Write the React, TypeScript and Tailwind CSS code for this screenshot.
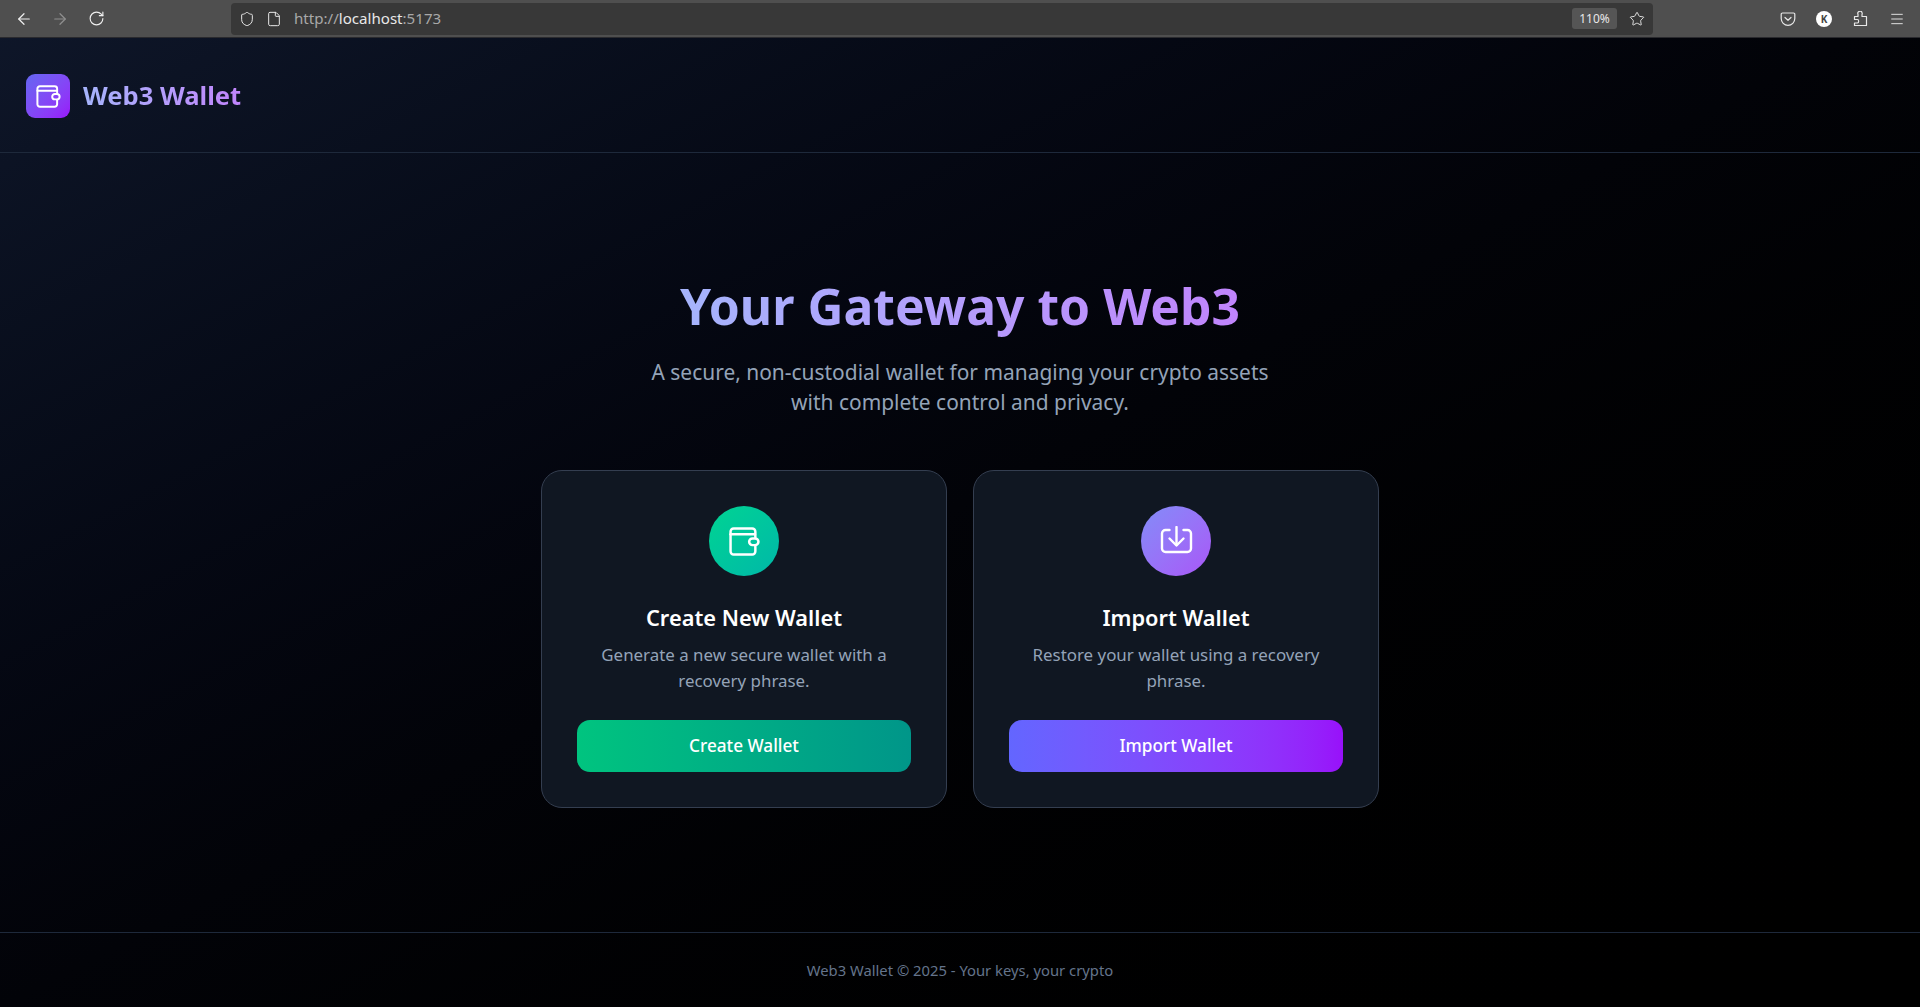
import { ArrowLeft, ArrowRight, RotateCw, Shield, File, Star, Menu } from "lucide-react"

const font = "font-['Noto_Sans',sans-serif]"

// wallet glyph, same drawing in the logo and in the card
function WalletIcon({ className }: { className: string }) {
  return (
    <svg viewBox="0 0 30 28" fill="none" stroke="white" strokeWidth="2.4" strokeLinecap="round" strokeLinejoin="round" className={className}>
      <path d="M25.5 10V4.5A3 3 0 0 0 22.5 1.5H4.5A3 3 0 0 0 1.5 4.5V23.5A3 3 0 0 0 4.5 26.5H22.5A3 3 0 0 0 25.5 23.5V18.5" />
      <path d="M1.5 7H25" />
      <rect x="19.5" y="11" width="9" height="6.5" rx="3.25" />
    </svg>
  )
}

function ImportIcon({ className }: { className: string }) {
  return (
    <svg viewBox="0 0 32 28" fill="none" stroke="white" strokeWidth="2.4" strokeLinecap="round" strokeLinejoin="round" className={className}>
      <path d="M9 4H5A3.5 3.5 0 0 0 1.5 7.5V22.5A3.5 3.5 0 0 0 5 26H27A3.5 3.5 0 0 0 30.5 22.5V7.5A3.5 3.5 0 0 0 27 4H23" />
      <path d="M16 1V19" />
      <path d="M9 12.5L16 19.5L23 12.5" />
    </svg>
  )
}

function PocketIcon() {
  return (
    <svg viewBox="0 0 16 16" fill="none" stroke="#e8e8e8" strokeWidth="1.2" strokeLinecap="round" strokeLinejoin="round" className="h-4 w-4">
      <path d="M2.5 2H13.5A1.3 1.3 0 0 1 14.8 3.3V7.5A6.8 6.8 0 0 1 1.2 7.5V3.3A1.3 1.3 0 0 1 2.5 2Z" />
      <path d="M5 6.5L8 9.3L11 6.5" />
    </svg>
  )
}

// firefox style extensions piece
function ExtensionIcon() {
  return (
    <svg viewBox="0 0 16 16" fill="none" stroke="#e8e8e8" strokeWidth="1.2" strokeLinejoin="round" className="h-4 w-4">
      <path d="M1.5 8.5V5.5H5V3.2A2 2 0 0 1 9 1.5C9.3 2 9.3 2.7 9 3.5V5.5H13.5V14.5H1.5V12H4.5C6 12 6 8.5 4.5 8.5Z" />
    </svg>
  )
}

function BrowserBar() {
  return (
    <div className={`flex h-[38px] shrink-0 items-center border-b border-[#2a2a2e] bg-[#4f4f4f] ${font}`}>
      <div className="flex w-[231px] shrink-0 items-center pl-[15px] text-[#f0f0f0]">
        <ArrowLeft className="h-[18px] w-[18px]" strokeWidth={1.6} />
        <ArrowRight className="ml-[18px] h-[18px] w-[18px] text-[#8f8f8f]" strokeWidth={1.6} />
        <RotateCw className="ml-[19px] h-[17px] w-[17px]" strokeWidth={1.6} />
      </div>
      <div className="flex h-[32px] w-[1422px] shrink-0 items-center rounded-[4px] bg-[#383838] pl-[8px] text-[#e8e8e8]">
        <Shield className="h-4 w-4" strokeWidth={1.5} />
        <File className="ml-[11px] h-4 w-4" strokeWidth={1.5} />
        <span className="ml-[12px] text-[15.1px] text-[#a8a8a8]">
          http://<span className="text-[#e8e8e8]">localhost</span>:5173
        </span>
        <span className="ml-auto flex h-[21px] w-[45px] items-center justify-center rounded-[3px] bg-[#555555] text-[12px] text-[#e8e8e8]">110%</span>
        <Star className="ml-[12px] mr-[8px] h-4 w-4" strokeWidth={1.4} />
      </div>
      <div className="ml-[127px] flex items-center text-[#e8e8e8]">
        <PocketIcon />
        <span className="ml-[20px] flex h-4 w-4 items-center justify-center rounded-full bg-white text-[10px] leading-none font-bold text-[#444444]">K</span>
        <span className="ml-[21px]">
          <ExtensionIcon />
        </span>
        <Menu className="ml-[20px] h-4 w-4" strokeWidth={1.4} />
      </div>
    </div>
  )
}

function ActionCard({
  icon,
  circle,
  title,
  text,
  button,
  buttonClass,
}: {
  icon: React.ReactNode
  circle: string
  title: string
  text: string
  button: string
  buttonClass: string
}) {
  return (
    <div className="flex h-[338px] w-[406px] flex-col items-center rounded-[21px] border border-[#343e50] bg-[#101722] px-[35px] pt-[35px]">
      <div className={`flex h-[70px] w-[70px] items-center justify-center rounded-full ${circle}`}>{icon}</div>
      <h2 className="mt-[26px] text-[21.8px] leading-[32px] font-semibold text-white">{title}</h2>
      <p className="mt-[8px] text-[16.9px] leading-[26.4px] text-[#94a3b8]">{text}</p>
      <button className={`mt-[25px] h-[52px] w-full rounded-[13px] text-[17.2px] font-medium text-white ${buttonClass}`}>{button}</button>
    </div>
  )
}

export default function App() {
  return (
    <div className={`flex h-[1007px] flex-col overflow-hidden bg-gradient-to-br from-[#0f172a] via-[#020308] via-50% to-black text-center ${font}`}>
      <BrowserBar />

      <header className="flex h-[115px] shrink-0 items-center gap-[13px] border-b border-[#1e293b] pt-[2px] pl-[26px]">
        <div className="flex h-[44px] w-[44px] items-center justify-center rounded-[9px] bg-gradient-to-br from-[#6366f1] to-[#9810fa]">
          <WalletIcon className="h-[23px] w-[25px]" />
        </div>
        <span className="bg-gradient-to-r from-[#a5b4fc] to-[#c084fc] bg-clip-text text-[25.6px] font-bold text-transparent">Web3 Wallet</span>
      </header>

      <main className="flex flex-1 flex-col items-center pt-[118px]">
        <h1 className="bg-gradient-to-r from-[#a5b4fc] to-[#c084fc] bg-clip-text text-[49.8px] leading-[70px] font-bold text-transparent">Your Gateway to Web3</h1>
        <p className="mt-[16px] text-[20.95px] leading-[30px] text-[#94a3b8]">
          A secure, non-custodial wallet for managing your crypto assets
          <br />
          with complete control and privacy.
        </p>
        <div className="mt-[53px] flex gap-[26px]">
          <ActionCard
            icon={<WalletIcon className="h-[29px] w-[31px]" />}
            circle="bg-gradient-to-br from-[#00d492] to-[#00b8a8]"
            title="Create New Wallet"
            text="Generate a new secure wallet with a recovery phrase."
            button="Create Wallet"
            buttonClass="bg-gradient-to-r from-[#00c47f] to-[#009689]"
          />
          <ActionCard
            icon={<ImportIcon className="mb-[3px] h-[28px] w-[33px]" />}
            circle="bg-gradient-to-br from-[#818cf8] to-[#a855f7]"
            title="Import Wallet"
            text="Restore your wallet using a recovery phrase."
            button="Import Wallet"
            buttonClass="bg-gradient-to-r from-[#6366ff] to-[#9810fa]"
          />
        </div>
      </main>

      <footer className="flex h-[75px] shrink-0 items-center justify-center border-t border-[#1e293b] text-[14.8px] text-[#64748b]">
        Web3 Wallet © 2025 - Your keys, your crypto
      </footer>
    </div>
  )
}
